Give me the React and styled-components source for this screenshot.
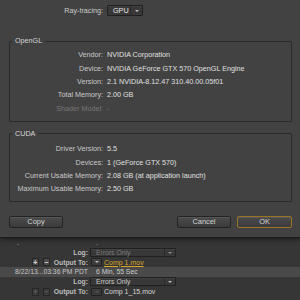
import React from 'react';
import styled, { createGlobalStyle } from 'styled-components';

const Global = createGlobalStyle`
  html, body { margin: 0; padding: 0; background: #363636; }
  body { font-family: "Liberation Sans", Arial, sans-serif; }
  * { box-sizing: border-box; }
`;

const Screen = styled.div`
  width: 300px;
  height: 300px;
  overflow: hidden;
  display: flex;
  flex-direction: column;
  background: #363636;
`;

const Dialog = styled.div`
  position: relative;
  z-index: 1;
  display: flex;
  flex-direction: column;
  padding: 5px 8px 9px 9px;
  background: #424242;
  box-shadow: 0 1px 0 #1c1c1c, 0 2px 5px rgba(0, 0, 0, 0.6);
  font-size: 7.2px;
  color: #cfcfcf;
`;

const TopRow = styled.div`
  display: grid;
  grid-template-columns: 94px auto;
  column-gap: 4px;
  height: 11px;
  align-items: center;
  justify-content: start;
`;

const Label = styled.span`
  text-align: right;
  white-space: nowrap;
  color: ${(p) => (p.$disabled ? '#777777' : '#cacaca')};
`;

const Value = styled.span`
  white-space: nowrap;
  color: ${(p) => (p.$disabled ? '#777777' : '#e0e0e0')};
`;

const Select = styled.div`
  display: flex;
  align-items: center;
  width: ${(p) => p.$w}px;
  height: ${(p) => p.$h}px;
  padding-left: ${(p) => p.$pl ?? 4}px;
  background: ${(p) => p.$bg || '#383838'};
  border: 1px solid #202020;
  border-radius: 1px;
  box-shadow: inset 0 1px 0 rgba(255, 255, 255, 0.05);
  color: ${(p) => p.$color || '#e8e8e8'};
  font-size: ${(p) => p.$fs || 7.2}px;
  white-space: nowrap;
`;

const SelectText = styled.span`
  flex: 1;
`;

const Arrow = styled.span`
  display: flex;
  align-items: center;
  justify-content: center;
  align-self: stretch;
  width: ${(p) => p.$w || 10}px;
  border-left: ${(p) => (p.$sep ? '1px solid #2a2a2a' : 'none')};
  &::after {
    content: '';
    border-left: 2px solid transparent;
    border-right: 2px solid transparent;
    border-top: 2.5px solid ${(p) => p.$color || '#bdbdbd'};
  }
`;

const Group = styled.fieldset`
  margin: ${(p) => p.$mt}px 0 0 0;
  padding: ${(p) => p.$pt}px 0 ${(p) => p.$pb}px 0;
  border: 1px solid #2a2a2a;
  border-radius: 1px;
  min-width: 0;
`;

const Legend = styled.legend`
  margin-left: 2px;
  padding: 0 3px;
  line-height: 8px;
  font-size: 7.2px;
  color: #d6d6d6;
`;

const Grid = styled.div`
  display: grid;
  grid-template-columns: 93px 1fr;
  column-gap: 4px;
  grid-auto-rows: 13.33px;
  align-items: center;
`;

const Buttons = styled.div`
  display: flex;
  gap: 6px;
  margin-top: 14px;
  height: 12px;
`;

const Spacer = styled.div`
  flex: 1;
`;

const Button = styled.button`
  width: ${(p) => p.$w}px;
  height: 12px;
  padding: 0;
  font-family: "Liberation Sans", Arial, sans-serif;
  font-size: 7.4px;
  color: #d4d4d4;
  background: linear-gradient(#4b4b4b, #3c3c3c);
  border: 1px solid ${(p) => (p.$primary ? '#9a7420' : '#232323')};
  border-radius: 2px;
  box-shadow: inset 0 1px 0 rgba(255, 255, 255, 0.07);
`;

const Queue = styled.div`
  flex: 1;
  padding-top: 2px;
  background: #363636;
  font-size: 6.8px;
  color: #c4c4c4;
`;

const HeadRow = styled.div`
  display: grid;
  grid-template-columns: 79px 1fr;
  height: 9px;
  padding-left: 17px;
  align-items: center;
  color: #8a8a8a;
`;

const QRow = styled.div`
  display: grid;
  grid-template-columns: 88px 1fr;
  column-gap: 2px;
  height: ${(p) => p.$h}px;
  align-items: center;
  background: ${(p) => (p.$hl ? '#4a4a4a' : 'transparent')};
`;

const QLabel = styled.div`
  display: flex;
  justify-content: flex-end;
  align-items: center;
  gap: 4px;
  white-space: nowrap;
  font-weight: ${(p) => (p.$bold ? 700 : 400)};
  color: ${(p) => (p.$bold ? '#bdbdbd' : '#c8c8c8')};
`;

const QCell = styled.div`
  display: flex;
  align-items: center;
  gap: 2px;
  padding-left: ${(p) => p.$pl || 0}px;
  white-space: nowrap;
  color: ${(p) => p.$color || '#cccccc'};
`;

const Mini = styled.span`
  display: flex;
  align-items: center;
  justify-content: center;
  width: 7px;
  height: 8px;
  background: ${(p) => (p.$off ? '#3c3c3c' : '#4d4d4d')};
  border: 1px solid #262626;
  font-weight: 700;
  font-size: 7px;
  color: ${(p) => (p.$off ? '#5a5a5a' : '#dcdcdc')};
`;

const FileLink = styled.span`
  color: #d6a42a;
  text-decoration: underline;
  font-size: 7px;
`;

const FileName = styled.span`
  color: #d6d6d6;
  font-size: 7px;
`;

const opengl = [
  ['Vendor:', 'NVIDIA Corporation'],
  ['Device:', 'NVIDIA GeForce GTX 570 OpenGL Engine'],
  ['Version:', '2.1 NVIDIA-8.12.47 310.40.00.05f01'],
  ['Total Memory:', '2.00 GB'],
  ['Shader Model:', '-', true],
];

const cuda = [
  ['Driver Version:', '5.5'],
  ['Devices:', '1 (GeForce GTX 570)'],
  ['Current Usable Memory:', '2.08 GB (at application launch)'],
  ['Maximum Usable Memory:', '2.50 GB'],
];

function Rows({ rows }) {
  return (
    <Grid>
      {rows.map(([l, v, d]) => (
        <React.Fragment key={l}>
          <Label $disabled={d}>{l}</Label>
          <Value $disabled={d}>{v}</Value>
        </React.Fragment>
      ))}
    </Grid>
  );
}

function LogRow({ dim }) {
  return (
    <QRow $h={10}>
      <QLabel $bold>Log:</QLabel>
      <QCell>
        <Select $w={86} $h={9} $pl={5} $fs={6.8} $bg="#383838" $color={dim ? '#7c7c7c' : '#c8c8c8'}>
          <SelectText>Errors Only</SelectText>
          <Arrow $w={11} $sep $color={dim ? '#8a8a8a' : '#bdbdbd'} />
        </Select>
      </QCell>
    </QRow>
  );
}

function OutputRow({ off, children, h }) {
  return (
    <QRow $h={h}>
      <QLabel $bold>
        <Mini $off={off}>+</Mini>
        <Mini $off={off}>−</Mini>
        <span>Output To:</span>
      </QLabel>
      <QCell $pl={1}>
        <Select $w={11} $h={8} $pl={0} $bg={off ? '#3a3a3a' : '#3e3e3e'}>
          <Arrow $w={9} $color={off ? '#555' : '#bdbdbd'} />
        </Select>
        {children}
      </QCell>
    </QRow>
  );
}

export default function App() {
  return (
    <>
      <Global />
      <Screen>
        <Dialog>
          <TopRow>
            <Label>Ray-tracing:</Label>
            <Select $w={36} $h={11} $pl={5}>
              <SelectText>GPU</SelectText>
              <Arrow $w={12} $sep />
            </Select>
          </TopRow>
          <Group $mt={21} $pt={3.3} $pb={6}>
            <Legend>OpenGL</Legend>
            <Rows rows={opengl} />
          </Group>
          <Group $mt={8} $pt={4.3} $pb={5}>
            <Legend>CUDA</Legend>
            <Rows rows={cuda} />
          </Group>
          <Buttons>
            <Button $w={54}>Copy</Button>
            <Spacer />
            <Button $w={54}>Cancel</Button>
            <Button $w={55} $primary>OK</Button>
          </Buttons>
        </Dialog>
        <Queue>
          <HeadRow>
            <span>-</span>
            <span>-</span>
          </HeadRow>
          <LogRow dim />
          <OutputRow h={9.5}>
            <FileLink>Comp 1.mov</FileLink>
          </OutputRow>
          <QRow $h={9.5} $hl>
            <QLabel>8/22/13...03:36 PM PDT</QLabel>
            <QCell $pl={6}>6 Min, 55 Sec</QCell>
          </QRow>
          <LogRow />
          <OutputRow off h={10}>
            <FileName>Comp 1_15.mov</FileName>
          </OutputRow>
        </Queue>
      </Screen>
    </>
  );
}
